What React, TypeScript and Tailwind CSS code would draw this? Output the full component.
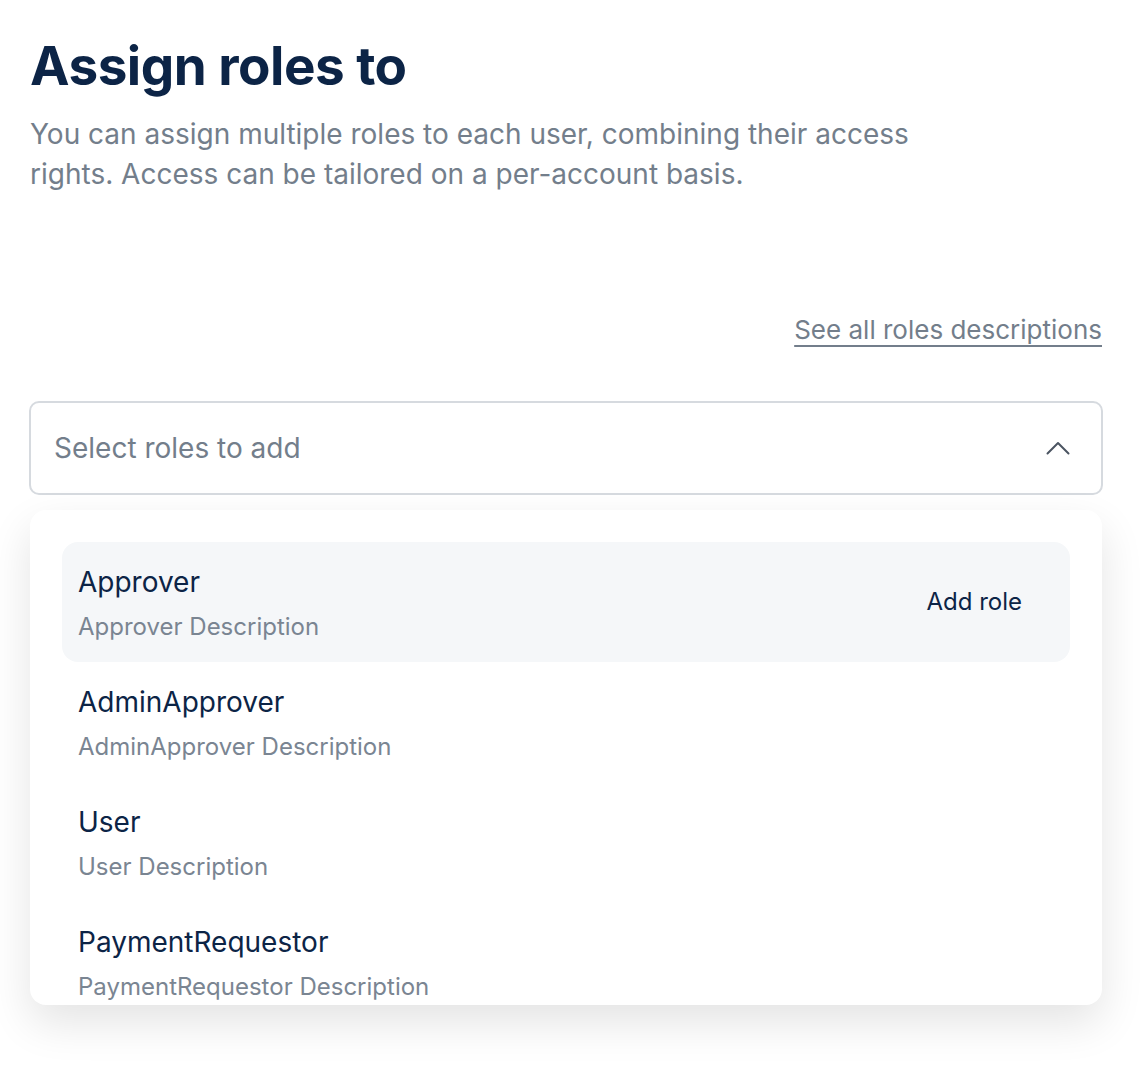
const roles = [
  { name: 'Approver', description: 'Approver Description' },
  { name: 'AdminApprover', description: 'AdminApprover Description' },
  { name: 'User', description: 'User Description' },
  { name: 'PaymentRequestor', description: 'PaymentRequestor Description' },
];

export default function App() {
  const active = 0;

  return (
    <div className="min-h-screen bg-white font-['Inter','Noto_Sans',sans-serif]">
      <div className="px-[30px] pt-8 w-[1132px]">
        {/* Header */}
        <h1 className="text-[53px] leading-[68px] font-bold text-[#0c2446] tracking-[-0.5px]">
          Assign roles to
        </h1>
        <p className="mt-[14px] max-w-[940px] text-[28px] leading-[40px] text-[#737e8b]">
          You can assign multiple roles to each user, combining their access
          rights. Access can be tailored on a per-account basis.
        </p>

        <div className="mt-[118px] flex justify-end">
          <a
            href="#"
            className="text-[26px] leading-[36px] text-[#737e8b] underline underline-offset-[6px] decoration-2"
          >
            See all roles descriptions
          </a>
        </div>

        {/* Select */}
        <div className="mt-[53px] -mx-px flex h-[94px] items-center justify-between rounded-[10px] border-2 border-[#d6dadf] pl-[23px] pr-[31px]">
          <span className="text-[28px] text-[#737e8b]">Select roles to add</span>
          <svg width="24" height="14" viewBox="0 0 24 14" fill="none">
            <path
              d="M1.5 12.5L12 2L22.5 12.5"
              stroke="#4b5562"
              strokeWidth="2"
              strokeLinecap="round"
              strokeLinejoin="round"
            />
          </svg>
        </div>

        {/* Dropdown */}
        <div className="mt-[15px] h-[495px] overflow-hidden rounded-[16px] bg-white px-8 pt-8 shadow-[0_18px_44px_rgba(0,0,0,0.11)]">
          {roles.map((role, i) => (
            <div
              key={role.name}
              className={`flex h-[120px] items-center justify-between rounded-[16px] px-4 ${
                i === active ? 'bg-[#f5f7f9]' : ''
              }`}
            >
              <div className="flex flex-col">
                <span className="text-[28px] leading-[40px] text-[#0c2446]">{role.name}</span>
                <span className="mt-[9px] text-[24px] leading-[32px] text-[#7a8592]">
                  {role.description}
                </span>
              </div>
              {i === active && (
                <button className="pr-8 text-[24px] text-[#0c2446]">Add role</button>
              )}
            </div>
          ))}
        </div>
      </div>
    </div>
  );
}
